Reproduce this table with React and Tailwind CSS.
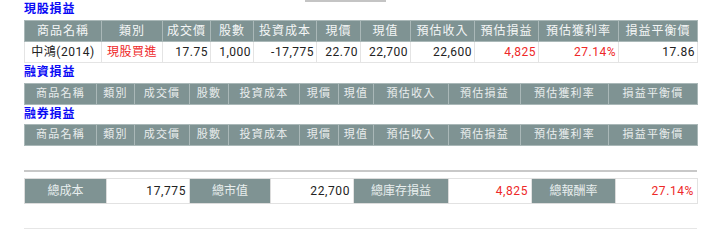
import React from "react";

const FONT = { fontFamily: "Roboto, 'Noto Sans CJK TC', sans-serif" };

const cols1 = [
  ["商品名稱", 77], ["類別", 61], ["成交價", 48], ["股數", 43], ["投資成本", 63], ["現價", 44],
  ["現值", 50], ["預估收入", 64], ["預估損益", 64], ["預估獲利率", 80], ["損益平衡價", 79],
];
const cols2 = [
  ["商品名稱", 72], ["類別", 38], ["成交價", 55], ["股數", 39], ["投資成本", 71], ["現價", 39],
  ["現值", 35], ["預估收入", 75], ["預估損益", 72], ["預估獲利率", 88], ["損益平衡價", 89],
];

const row1 = [
  { t: "中鴻(2014)", a: "c" },
  { t: "現股買進", a: "c", red: true },
  { t: "17.75" }, { t: "1,000" }, { t: "-17,775" }, { t: "22.70" }, { t: "22,700" }, { t: "22,600" },
  { t: "4,825", red: true }, { t: "27.14%", red: true }, { t: "17.86" },
];

function Title({ children, cls }) {
  return (
    <div className={`text-[12px] font-bold text-[#0a0af5] tracking-[0.8px] ${cls}`}>{children}</div>
  );
}

function Table({ cols, small, data }) {
  return (
    <table className="table-fixed border-collapse w-[673px]">
      <colgroup>
        {cols.map(([, w], i) => (
          <col key={i} style={{ width: w }} />
        ))}
      </colgroup>
      <thead>
        <tr className="h-[21px]">
          {cols.map(([h], i) => (
            <th
              key={i}
              className={`bg-[#7f9393] border border-[#aab8b8] p-0 font-normal text-center leading-[20px] whitespace-nowrap ${
                small ? "text-[11px] text-[#e9eded] tracking-[1.2px]" : "text-[12px] text-[#f4f6f6] tracking-[1px]"
              }`}
            >
              {h}
            </th>
          ))}
        </tr>
      </thead>
      {data && (
        <tbody>
          <tr className="h-[21px]">
            {data.map((c, i) => (
              <td
                key={i}
                className={`border border-[#e4e4e4] p-0 text-[12px] leading-[20px] tracking-[0.5px] whitespace-nowrap ${
                  c.a === "c" ? "text-center" : "text-right pr-[2px]"
                } ${c.red ? "text-[#ee2828]" : "text-[#222]"}`}
              >
                {c.t}
              </td>
            ))}
          </tr>
        </tbody>
      )}
    </table>
  );
}

const summary = [
  ["總成本", 82, "17,775", 83, false],
  ["總市值", 81, "22,700", 83, false],
  ["總庫存損益", 95, "4,825", 83, true],
  ["總報酬率", 84, "27.14%", 82, true],
];

export default function App() {
  return (
    <div className="w-[720px] h-[246px] bg-white pl-[24px]" style={FONT}>
      <div className="h-[2px] flex">
        <div className="ml-[281px] w-[81px] h-[2px] bg-[#c4c4c4]" />
      </div>
      <Title cls="h-[18px] leading-[14px]">現股損益</Title>
      <Table cols={cols1} data={row1} />
      <Title cls="h-[20px] leading-[18px]">融資損益</Title>
      <Table cols={cols2} small />
      <Title cls="h-[19px] leading-[18px]">融券損益</Title>
      <Table cols={cols2} small />
      <div className="mt-[24px] w-[673px] h-[2px] bg-[#c8c8c8]" />
      <table className="mt-[6px] table-fixed border-collapse w-[673px]">
        <tbody>
          <tr className="h-[25px]">
            {summary.map(([l, lw, v, vw, red], i) => (
              <React.Fragment key={i}>
                <td
                  style={{ width: lw }}
                  className="bg-[#7f9393] border border-[#dcdcdc] p-0 text-center text-[12px] text-[#e8eeee] whitespace-nowrap"
                >
                  {l}
                </td>
                <td
                  style={{ width: vw }}
                  className={`border border-[#e2e2e2] p-0 pr-[3px] text-right text-[12px] tracking-[0.6px] whitespace-nowrap ${
                    red ? "text-[#ee2828]" : "text-[#222]"
                  }`}
                >
                  {v}
                </td>
              </React.Fragment>
            ))}
          </tr>
        </tbody>
      </table>
      <div className="mt-[24px] w-[673px] h-[1px] bg-[#e6e6e6]" />
    </div>
  );
}
